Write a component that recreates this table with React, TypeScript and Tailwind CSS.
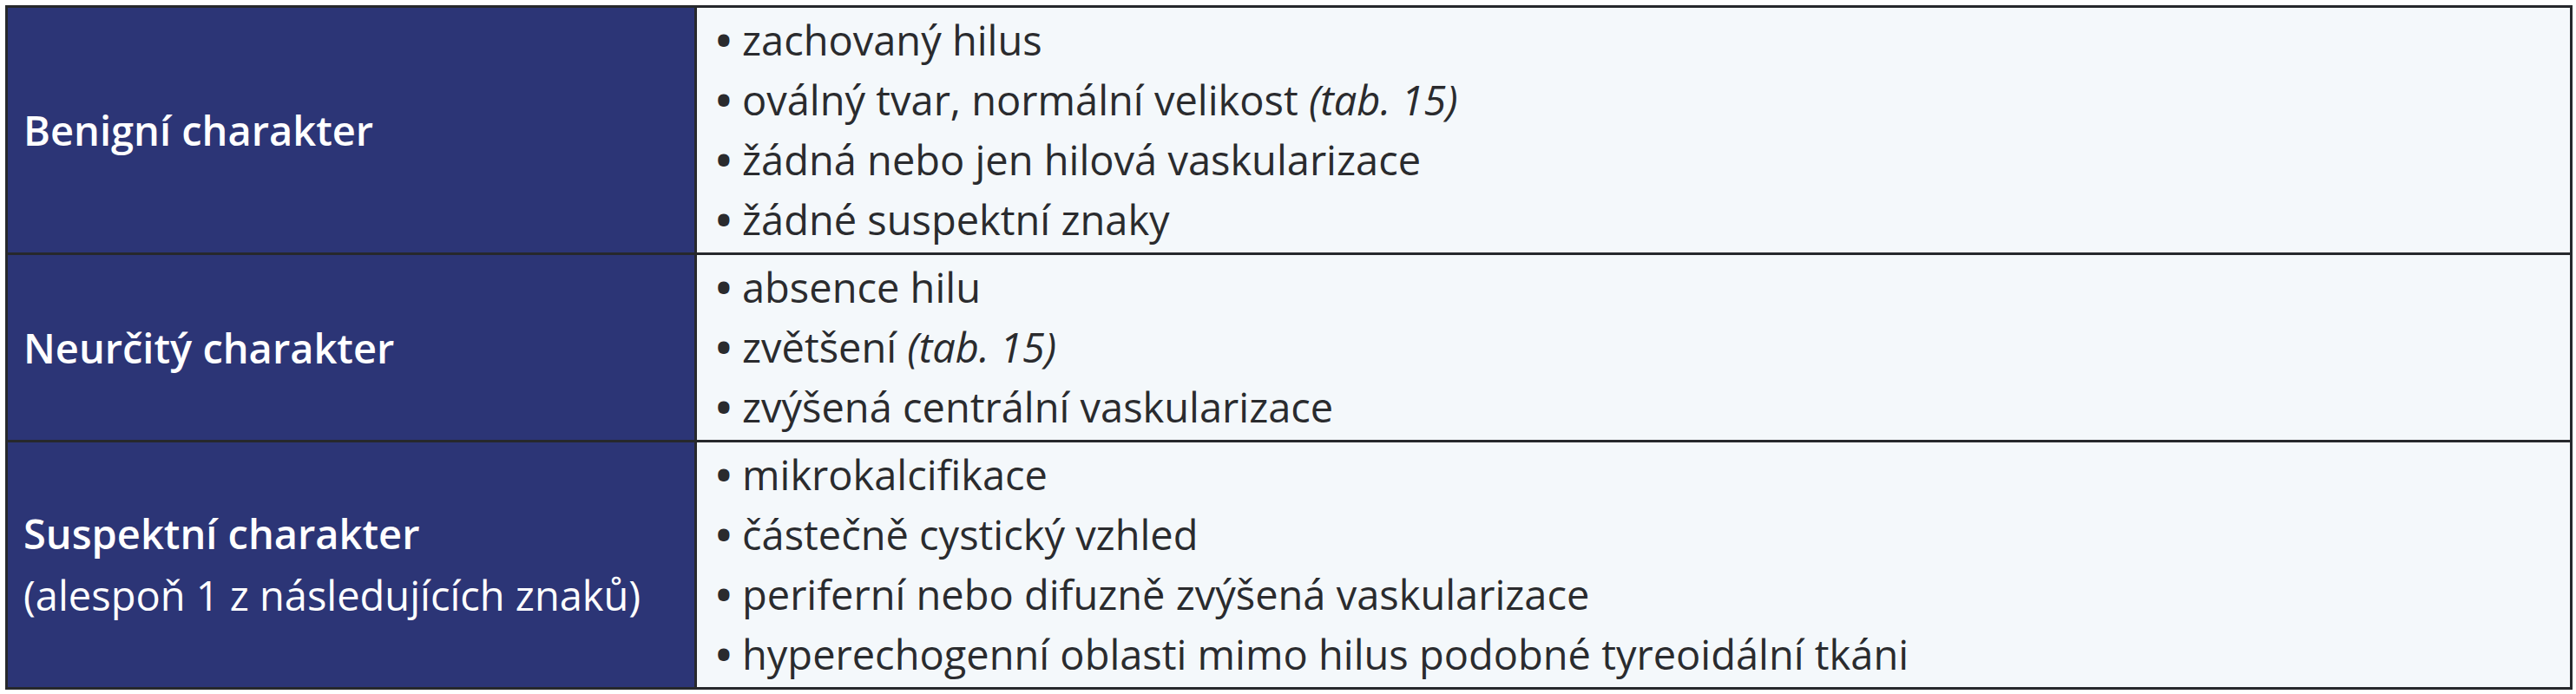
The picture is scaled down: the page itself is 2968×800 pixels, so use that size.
import React from "react";

type Item = { text: string; ref?: string };

const rows: { title: string; sub?: string; items: Item[] }[] = [
  {
    title: "Benigní charakter",
    items: [
      { text: "zachovaný hilus" },
      { text: "oválný tvar, normální velikost", ref: "(tab. 15)" },
      { text: "žádná nebo jen hilová vaskularizace" },
      { text: "žádné suspektní znaky" },
    ],
  },
  {
    title: "Neurčitý charakter",
    items: [
      { text: "absence hilu" },
      { text: "zvětšení", ref: "(tab. 15)" },
      { text: "zvýšená centrální vaskularizace" },
    ],
  },
  {
    title: "Suspektní charakter",
    sub: "(alespoň 1 z následujících znaků)",
    items: [
      { text: "mikrokalcifikace" },
      { text: "částečně cystický vzhled" },
      { text: "periferní nebo difuzně zvýšená vaskularizace" },
      { text: "hyperechogenní oblasti mimo hilus podobné tyreoidální tkáni" },
    ],
  },
];

export default function App() {
  return (
    <div className="w-[2968px] h-[800px] bg-white pt-[6px] pl-[6px] font-['Open_Sans',sans-serif]">
      <div className="w-[2958px] border-[3px] border-[#26282c] flex flex-col">
        {rows.map((r, i) => (
          <div
            key={i}
            className={`flex ${i > 0 ? "border-t-[3px] border-[#26282c]" : ""}`}
          >
            <div className="w-[794px] shrink-0 border-r-[3px] border-[#26282c] bg-[#2c3576] flex flex-col justify-center pl-[18px] text-white">
              <div className="text-[47px] leading-[70px] font-semibold">{r.title}</div>
              {r.sub && (
                <div className="text-[47px] leading-[72px] font-normal">{r.sub}</div>
              )}
            </div>
            <div className="flex-1 bg-[#f4f8fb] py-[3px] pl-[22px] text-[#2a2b2e] text-[47px] leading-[69px] font-normal">
              {r.items.map((it, j) => (
                <div key={j} className="whitespace-nowrap flex items-baseline">
                  <span className="font-bold w-[30px] shrink-0">•</span>
                  <span>
                    {it.text}
                    {it.ref && (
                      <>
                        {" "}
                        <span className="italic">{it.ref}</span>
                      </>
                    )}
                  </span>
                </div>
              ))}
            </div>
          </div>
        ))}
      </div>
    </div>
  );
}
